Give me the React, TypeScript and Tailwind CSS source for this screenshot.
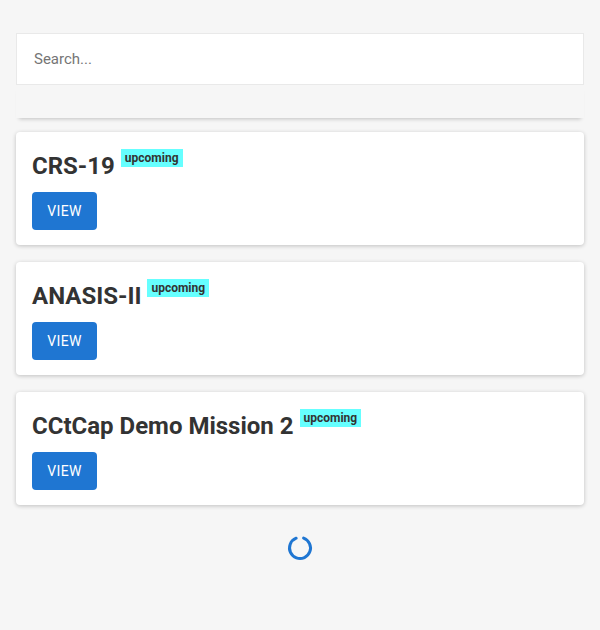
import { useState } from "react"

const launches = [
  { id: 1, name: "CRS-19", upcoming: true },
  { id: 2, name: "ANASIS-II", upcoming: true },
  { id: 3, name: "CCtCap Demo Mission 2", upcoming: true },
]

export default function App() {
  const [query, setQuery] = useState("")

  return (
    <main className="min-h-[630px] bg-[#f6f6f6] px-4 pt-[33px] font-['Roboto',sans-serif] text-[#333]">
      <input
        value={query}
        onChange={(e) => setQuery(e.target.value)}
        placeholder="Search..."
        className="block h-[52px] w-full border border-[#e9e9e9] bg-white px-[17px] text-[15px] text-[#333] outline-none placeholder:text-[#757575]"
      />
      {/* header shadow strip */}
      <div className="h-[33px] bg-[#f6f6f6] shadow-[0_4px_4px_-3px_rgba(0,0,0,0.22)]" />

      <div className="mt-[14px] flex flex-col gap-[17px]">
        {launches.map((l) => (
          <div key={l.id} className="rounded bg-white px-4 pt-4 pb-[15px] shadow-[0_1px_4px_rgba(0,0,0,0.22)]">
            <h2 className="flex items-start text-[24px] font-bold leading-[36px] text-[#333]">
              {l.name}
              {l.upcoming && (
                <span className="ml-[6px] mt-[1px] bg-[#66ffff] px-[4px] text-[12px] font-bold leading-[18px] text-[#333]">
                  upcoming
                </span>
              )}
            </h2>
            <button className="mt-2 h-[38px] w-[65px] rounded bg-[#1f76d2] text-[14px] font-normal tracking-[0.4px] text-white">
              VIEW
            </button>
          </div>
        ))}
      </div>

      <div className="flex justify-center pt-[30px]">
        <svg width="26" height="26" viewBox="0 0 26 26">
          <circle
            cx="13"
            cy="13"
            r="10.5"
            fill="none"
            stroke="#1f76d2"
            strokeWidth="3"
            strokeLinecap="round"
            strokeDasharray="58 8"
            transform="rotate(-70 13 13)"
          />
        </svg>
      </div>
    </main>
  )
}
